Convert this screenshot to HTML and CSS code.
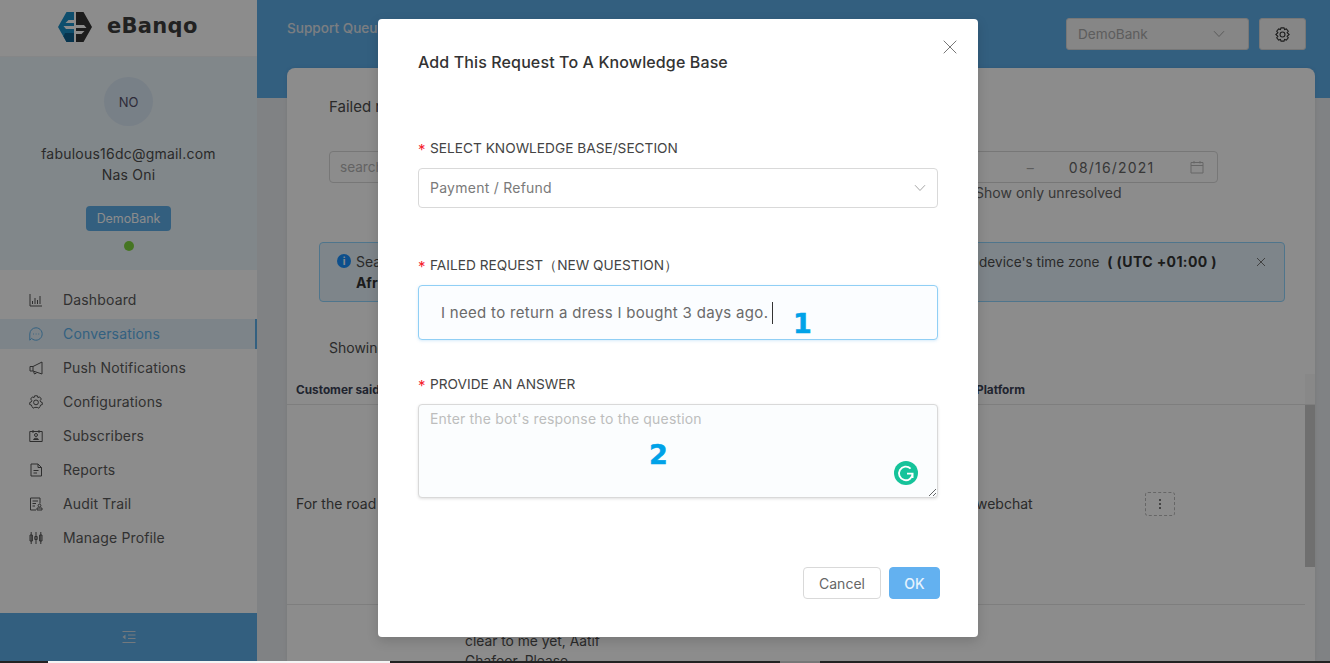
FILE: index.html
```html
<!DOCTYPE html>
<html lang="en">
<head>
<meta charset="utf-8">
<title>eBanqo - Support Queue</title>
<link rel="stylesheet" href="styles.css">
</head>
<body>
<div class="screen">
  <div class="app">
    <aside class="sidebar">
      <div class="brand">
        <svg class="brand-mark" viewBox="0 0 34 30" width="34" height="30">
          <path d="M8.5 0H16V8H10.5L7.5 11H16V14H5.5L8 17H16V30H8.5L0 15Z" fill="#1b8fc7"/>
          <path d="M7 21H16V30H8.5L5.5 24.5Z" fill="#0e5f8e"/>
          <path d="M18 0H25.5L34 15L25.5 30H18V22H23.5L26.5 19H18V16H28.5L26 13H18V8H18Z" fill="#333"/>
        </svg>
        <span class="brand-name">eBanqo</span>
      </div>
      <div class="profile">
        <div class="avatar">NO</div>
        <div class="email">fabulous16dc@gmail.com</div>
        <div class="person">Nas Oni</div>
        <div class="org-badge">DemoBank</div>
        <div class="status-dot"></div>
      </div>
      <nav class="menu">
        <a class="menu-item">
          <svg viewBox="0 0 14 14" class="menu-icon"><path d="M1 1V13H13M3.5 11V8M6 11V5M8.5 11V7M11 11V3"/></svg>
          <span>Dashboard</span>
        </a>
        <a class="menu-item is-active">
          <svg viewBox="0 0 14 14" class="menu-icon"><path d="M7 .8A6.2 6.2 0 1 1 2.6 11.4L.8 13.2V7A6.2 6.2 0 0 1 7 .8Z"/><path d="M4 7H4.8M6.7 7H7.5M9.4 7H10.2"/></svg>
          <span>Conversations</span>
        </a>
        <a class="menu-item">
          <svg viewBox="0 0 14 14" class="menu-icon"><path d="M13 1V13L4 10H1V5.5H4ZM4 5.5V10M4.5 10.5 5.5 13 7.5 12"/></svg>
          <span>Push Notifications</span>
        </a>
        <a class="menu-item">
          <svg viewBox="0 0 14 14" class="menu-icon"><path d="M5.6.8H8.4L8.9 2.6 10.6 1.9 12.4 4 11.2 5.4 11.8 7 13.3 7.6V9.6L11.6 10 11 11.6 9.8 13.2 8.2 12.4H5.8L4.2 13.2 3 11.6 2.4 10 .7 9.6V7.6L2.2 7 2.8 5.4 1.6 4 3.4 1.9 5.1 2.6Z"/><circle cx="7" cy="7.4" r="2.4"/></svg>
          <span>Configurations</span>
        </a>
        <a class="menu-item">
          <svg viewBox="0 0 14 14" class="menu-icon"><path d="M.8 2.5H13.2V12.5H.8ZM4 1V4M10 1V4"/><circle cx="7" cy="6" r="1.5"/><path d="M4.5 10.5C4.7 8.8 9.3 8.8 9.5 10.5Z"/></svg>
          <span>Subscribers</span>
        </a>
        <a class="menu-item">
          <svg viewBox="0 0 14 14" class="menu-icon"><path d="M2 1H9L12.5 4.5V13H2ZM9 1V4.5H12.5M4.5 7.5H9.5M4.5 10H8"/></svg>
          <span>Reports</span>
        </a>
        <a class="menu-item">
          <svg viewBox="0 0 14 14" class="menu-icon"><path d="M7 13H1.5V1H11V6.5M3.5 4H9M3.5 6.5H7M3.5 9H6"/><circle cx="10.5" cy="8.6" r="1.4"/><path d="M8 13V11H13V13Z"/></svg>
          <span>Audit Trail</span>
        </a>
        <a class="menu-item">
          <svg viewBox="0 0 14 14" class="menu-icon"><path d="M2.2 1V13M7 1V13M11.8 1V13"/><path d="M1 4H3.4V10H1ZM5.8 5.5H8.2V8.5H5.8ZM10.6 4H13V10H10.6Z"/></svg>
          <span>Manage Profile</span>
        </a>
      </nav>
      <div class="collapse-bar">
        <svg viewBox="0 0 14 14" width="14" height="14" class="collapse-icon"><path d="M.5 1.5H13.5M6 5H13.5M6 8.5H13.5M.5 12.5H13.5"/><path class="solid" d="M3.5 4.5V9.5L.5 7Z"/></svg>
      </div>
    </aside>
    <main class="main">
      <header class="topbar">
        <div class="crumb">Support Queue</div>
        <div class="top-controls">
          <div class="bank-select"><span>DemoBank</span>
            <svg viewBox="0 0 12 8" width="12" height="8" class="chev"><path d="M1 1.2 6 6.5 11 1.2"/></svg>
          </div>
          <div class="gear-button">
            <svg viewBox="0 0 14 14" width="15" height="15" class="gear"><path d="M5.6.8H8.4L8.9 2.4 10.6 1.8 12.4 4 11.3 5.3 13.2 7 11.3 8.7 12.4 10 10.6 12.2 8.9 11.6 8.4 13.2H5.6L5.1 11.6 3.4 12.2 1.6 10 2.7 8.7.8 7 2.7 5.3 1.6 4 3.4 1.8 5.1 2.4Z"/><circle cx="7" cy="7" r="2.3"/></svg>
          </div>
        </div>
      </header>
      <section class="card">
        <h1 class="card-title">Failed requests</h1>
        <div class="filters">
          <div class="search-box">search</div>
          <div class="date-column">
            <div class="date-range">
              <span class="date-start">21</span><span class="date-dash">–</span><span class="date-end">08/16/2021</span>
              <svg viewBox="0 0 14 14" width="14" height="14" class="cal"><path d="M1 2.5H13V13H1ZM1 5.5H13M4 1V3.5M10 1V3.5"/></svg>
            </div>
            <div class="unresolved">Show only unresolved</div>
          </div>
        </div>
        <div class="alert">
          <div class="alert-info">i</div>
          <div class="alert-left"><div>Search</div><strong>Africa</strong></div>
          <div class="alert-right">device's time zone <strong class="tz">( (UTC +01:00 )</strong></div>
          <svg viewBox="0 0 10 10" width="10" height="10" class="alert-close"><path d="M1 1 9 9M9 1 1 9"/></svg>
        </div>
        <div class="showing">Showing</div>
        <div class="table">
          <div class="thead">
            <div class="th-customer">Customer said</div>
            <div class="th-platform">Platform</div>
          </div>
          <div class="tbody">
            <div class="row">
              <div class="cell-customer">For the road</div>
              <div class="cell-platform">webchat</div>
              <div class="row-action">
                <svg viewBox="0 0 4 12" width="4" height="12"><circle cx="2" cy="2" r="1"/><circle cx="2" cy="6" r="1"/><circle cx="2" cy="10" r="1"/></svg>
              </div>
            </div>
            <div class="row-next">clear to me yet, Aatif<br>Ghafoor. Please</div>
            <div class="scroll-thumb"></div>
          </div>
        </div>
      </section>
    </main>
    <div class="overlay"></div>
    <div class="modal">
      <svg viewBox="0 0 14 14" width="14" height="14" class="modal-close"><path d="M.7.7 13.3 13.3M13.3.7.7 13.3"/></svg>
      <h2 class="modal-title">Add This Request To A Knowledge Base</h2>
      <form class="form">
        <label class="field-label"><span class="req">*</span>SELECT KNOWLEDGE BASE/SECTION</label>
        <div class="kb-select"><span>Payment / Refund</span>
          <svg viewBox="0 0 12 8" width="12" height="8" class="kb-chev"><path d="M1 1.2 6 6.5 11 1.2"/></svg>
        </div>
        <label class="field-label label-gap-a"><span class="req">*</span>FAILED REQUEST（NEW QUESTION）</label>
        <div class="question-input">I need to return a dress I bought 3 days ago.<span class="caret"></span></div>
        <label class="field-label label-gap-b"><span class="req">*</span>PROVIDE AN ANSWER</label>
        <div class="answer-wrap">
          <textarea class="answer" placeholder="Enter the bot's response to the question"></textarea>
          <svg viewBox="0 0 24 24" width="24" height="24" class="grammarly"><circle cx="12" cy="12" r="12" fill="#15c39a"/><path d="M16.6 7.6A6.8 6.8 0 1 0 18.6 12.6H13M18.6 12.6V17" fill="none" stroke="#fff" stroke-width="1.8"/></svg>
        </div>
        <div class="modal-footer">
          <button type="button" class="btn-cancel">Cancel</button>
          <button type="button" class="btn-ok">OK</button>
        </div>
      </form>
      <span class="mark mark-one">1</span>
      <span class="mark mark-two">2</span>
    </div>
  </div>
  <div class="strip"><i class="s-dark s1"></i><i class="s-white"></i><i class="s-dark s2"></i><i class="s-grey"></i><i class="s-dark s3"></i></div>
</div>
</body>
</html>
```
FILE: styles.css
```css
* { box-sizing: border-box; }
html, body { margin: 0; height: 100%; overflow: hidden; }
body { font-family: Inter, Roboto, "Liberation Sans", sans-serif; font-size: 14px; color: #4d4d4d; background: #fff; }
.screen { width: 1330px; height: 663px; display: flex; flex-direction: column; }
.app { position: relative; height: 661px; display: flex; overflow: hidden; }

/* sidebar */
.sidebar { width: 257px; flex: none; display: flex; flex-direction: column; background: #fff; }
.brand { height: 57px; flex: none; display: flex; align-items: center; padding-left: 58px; gap: 15px; border-bottom: 1px solid #f2f4f6; }
.brand-mark { flex: none; margin-top: -2px; }
.brand-name { font-family: "DejaVu Sans", sans-serif; font-weight: 700; font-size: 21px; letter-spacing: .3px; color: #3d3d3d; margin-top: -4px; }
.profile { height: 213px; flex: none; display: flex; flex-direction: column; align-items: center; background: #ecf6fb; padding-top: 20px; }
.avatar { width: 49px; height: 49px; border-radius: 50%; background: #dbe9f6; display: flex; align-items: center; justify-content: center; color: #55506a; font-size: 13px; }
.email { margin-top: 17px; line-height: 21px; font-size: 14px; letter-spacing: .22px; }
.person { line-height: 21px; font-size: 14px; letter-spacing: .22px; }
.org-badge { margin-top: 21px; height: 25px; width: 85px; border-radius: 4px; background: #5dade8; color: #fff; font-size: 12.4px; display: flex; align-items: center; justify-content: center; }
.status-dot { margin-top: 10px; width: 10px; height: 10px; border-radius: 50%; background: #7fd63f; }
.menu { flex: 1; display: flex; flex-direction: column; gap: 4px; padding-top: 15px; }
.menu-item { height: 30px; display: flex; align-items: center; padding-left: 29px; gap: 20px; font-size: 14px; letter-spacing: .15px; color: #5a5a5a; }
.menu-item span { line-height: 20px; margin-top: -1px; }
.menu-icon { width: 14px; height: 14px; fill: none; stroke: #555; stroke-width: 1; }
.menu-item.is-active { background: #e3f1fa; color: #5db0ea; border-right: 2px solid #5db0ea; }
.menu-item.is-active .menu-icon { stroke: #5db0ea; }
.collapse-bar { height: 48px; flex: none; background: #5dade8; display: flex; align-items: center; justify-content: center; }
.collapse-icon { fill: none; stroke: #d2dde6; stroke-width: 1; }
.collapse-icon .solid { fill: #d2dde6; stroke: none; }

/* main */
.main { flex: 1; min-width: 0; background: linear-gradient(#5dade8 98px, #eaedf0 98px); padding: 0 15px 0 30px; display: flex; flex-direction: column; }
.topbar { height: 68px; flex: none; display: flex; justify-content: space-between; margin-right: 9px; }
.crumb { margin-top: 18px; line-height: 20px; color: #e0e6ec; font-weight: 500; font-size: 13.6px; }
.top-controls { margin-top: 18px; display: flex; gap: 10px; height: 32px; }
.bank-select { width: 183px; height: 32px; background: #f4f4f4; border-radius: 3px; border: 1px solid #d9d9d9; display: flex; align-items: center; justify-content: space-between; padding: 0 23px 0 11px; color: #aaa; font-size: 13.6px; }
.chev, .kb-chev { fill: none; stroke: #a6a6a6; stroke-width: 1; }
.gear-button { width: 47px; height: 32px; background: #f4f4f4; border-radius: 3px; border: 1px solid #d9d9d9; display: flex; align-items: center; justify-content: center; }
.gear { fill: none; stroke: #333; stroke-width: 1; }
.card { flex: 1; min-height: 0; background: #fff; border-radius: 8px 8px 0 0; box-shadow: 0 0 4px rgba(0,0,0,.08); padding-top: 28px; position: relative; overflow: hidden; }
.card-title { margin: 0 0 0 42px; font-size: 15px; line-height: 22px; font-weight: 400; color: #4d4d4d; }
.filters { margin: 33px 97px 0 42px; display: flex; justify-content: space-between; align-items: flex-start; }
.search-box { width: 300px; height: 32px; border: 1px solid #d9d9d9; border-radius: 4px; line-height: 30px; padding-left: 10px; color: #b5b5b5; font-size: 13.6px; }
.date-column { width: 330px; }
.date-range { height: 32px; border: 1px solid #d9d9d9; border-radius: 4px; display: flex; align-items: center; color: #666; font-size: 14px; letter-spacing: 1.2px; padding-right: 13px; }
.date-start { margin-left: 70px; }
.date-dash { margin-left: 51px; color: #aaa; }
.date-end { margin-left: 34px; flex: 1; }
.cal { fill: none; stroke: #bbb; stroke-width: 1; }
.unresolved { margin: 0 0 0 87px; line-height: 20px; font-size: 14px; letter-spacing: .03px; color: #666; }
.alert { position: relative; margin: 39px 30px 0 32px; height: 60px; border: 1px solid #91d5ff; border-radius: 4px; background: #e5f3fb; padding: 8px 0 0 36px; display: flex; justify-content: space-between; line-height: 21px; }
.alert-info { position: absolute; left: 17px; top: 11px; width: 14px; height: 14px; border-radius: 50%; background: #1890ff; color: #fff; font-size: 10px; font-weight: 700; line-height: 14px; text-align: center; }
.alert-left strong { color: #333; }
.alert-right { margin-right: 67px; font-size: 13.6px; }
.tz { color: #333; font-size: 14px; margin-left: 4px; letter-spacing: .4px; }
.alert-close { position: absolute; right: 18px; top: 14px; fill: none; stroke: #777; stroke-width: 1; }
.showing { margin: 35px 0 0 42px; line-height: 22px; font-size: 14px; }
.table { margin-top: 15px; }
.thead { height: 31px; border-bottom: 1px solid #e6e6e6; display: flex; align-items: flex-end; padding: 0 0 7px 9px; position: relative; font-weight: 700; font-size: 11.8px; color: #3b4256; }
.thead::after { content: ""; position: absolute; right: 0; top: 0; bottom: 0; width: 10px; background: #f7f7f7; }
.th-customer { width: 680px; }
.tbody { position: relative; padding-right: 10px; }
.row { height: 200px; display: flex; align-items: center; padding: 0 0 2px 9px; border-bottom: 1px solid #e6e6e6; position: relative; font-size: 14px; }
.cell-customer { width: 680px; }
.row-action { position: absolute; left: 858px; top: 87px; width: 30px; height: 24px; border: 1px dashed #bbb; border-radius: 3px; display: flex; align-items: center; justify-content: center; }
.row-action svg { fill: #555; }
.row-next { position: absolute; top: 226px; left: 178px; line-height: 20px; font-size: 13.8px; }
.scroll-thumb { position: absolute; right: 0; top: 0; width: 10px; height: 162px; background: #cbcbcb; }

/* overlay and modal */
.overlay { position: absolute; inset: 0; background: rgba(0,0,0,.45); }
.modal { position: absolute; left: 378px; top: 19px; width: 600px; height: 618px; background: #fff; border-radius: 4px; padding: 31px 40px 0; box-shadow: 0 4px 12px rgba(0,0,0,.15); }
.modal-close { position: absolute; right: 21px; top: 21px; fill: none; stroke: #777; stroke-width: 1; }
.modal-title { margin: 0; font-size: 16px; letter-spacing: .12px; line-height: 24px; font-weight: 500; color: #333; }
.form { display: flex; flex-direction: column; margin-top: 63px; }
.field-label { display: block; line-height: 22px; font-size: 13.7px; color: #444; }
.req { color: #f5222d; font-size: 15px; display: inline-block; width: 12px; vertical-align: -2px; line-height: 18px; }
.kb-select { margin-top: 9px; height: 40px; border: 1px solid #d9d9d9; border-radius: 4px; display: flex; align-items: center; justify-content: space-between; padding: 0 11px 1px; color: #7a7a7a; font-size: 14px; letter-spacing: .25px; }
.label-gap-a { margin-top: 46px; }
.label-gap-b { margin-top: 33px; }
.question-input { margin-top: 9px; height: 55px; border: 1px solid #90cff5; border-radius: 4px; background: #fbfdff; box-shadow: 0 1px 3px rgba(93,174,235,.25); padding-left: 22px; display: flex; align-items: center; color: #6a6a6a; font-size: 15px; letter-spacing: .3px; }
.caret { width: 1px; height: 22px; background: #333; margin-left: 4px; }
.answer-wrap { position: relative; margin-top: 9px; height: 94px; }
.answer { display: block; width: 100%; height: 94px; border: 1px solid #d9d9d9; border-radius: 4px; background: #fbfdfe; box-shadow: 0 1px 3px rgba(0,0,0,.12); padding: 4px 11px; font-family: inherit; font-size: 14px; letter-spacing: .18px; line-height: 20px; outline: none; }
.answer::placeholder { color: #bdbdbd; opacity: 1; }
.grammarly { position: absolute; left: 476px; top: 57px; }
.modal-footer { margin: 69px -2px 0 0; display: flex; justify-content: flex-end; gap: 8px; }
.btn-cancel, .btn-ok { height: 32px; border-radius: 4px; font-family: inherit; font-size: 14px; padding: 0; }
.btn-cancel { width: 78px; background: #fff; border: 1px solid #d9d9d9; color: #666; }
.btn-ok { width: 51px; background: #63b1f0; border: 1px solid #63b1f0; color: #e6f3fd; font-weight: 500; }
.mark { position: absolute; font-family: "DejaVu Sans", sans-serif; font-weight: 700; font-size: 27px; line-height: 32px; color: #00a2e8; -webkit-text-stroke: .5px #00a2e8; }
.mark-one { left: 415px; top: 289px; }
.mark-two { left: 271px; top: 420px; }

/* bottom strip */
.strip { height: 2px; flex: none; display: flex; }
.s-dark { background: #222; }
.s1 { width: 48px; }
.s-white { width: 342px; background: #f4f4f4; }
.s2 { width: 390px; }
.s-grey { width: 40px; background: #777; }
.s3 { flex: 1; }
```
